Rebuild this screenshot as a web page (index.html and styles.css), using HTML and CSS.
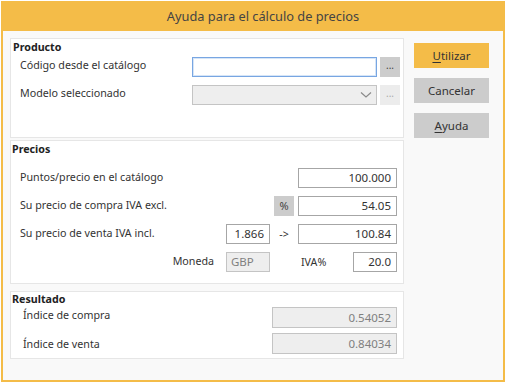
FILE: index.html
```
<!DOCTYPE html>
<html lang="es">
<head>
<meta charset="utf-8">
<title>Ayuda para el cálculo de precios</title>
<link rel="stylesheet" href="styles.css">
</head>
<body>
<div class="window">
  <div class="titlebar">Ayuda para el cálculo de precios</div>
  <div class="content">
    <div class="panels">
      <div class="panel producto">
        <div class="ph">Producto</div>
        <div class="prow">
          <span class="label">Código desde el catálogo</span>
          <div class="field focus"></div>
          <div class="dots">...</div>
        </div>
        <div class="prow">
          <span class="label">Modelo seleccionado</span>
          <div class="field disabled select">
            <svg class="chev" width="12" height="8" viewBox="0 0 12 8"><path d="M1 1.5 L6 6 L11 1.5" fill="none" stroke="#8a8a8a" stroke-width="1.2"/></svg>
          </div>
          <div class="dots off">...</div>
        </div>
      </div>

      <div class="panel precios">
        <div class="ph">Precios</div>
        <div class="pgrid">
          <span class="label c1">Puntos/precio en el catálogo</span>
          <div class="field num c4">100.000</div>

          <span class="label c1">Su precio de compra IVA excl.</span>
          <div class="pct c3">%</div>
          <div class="field num c4">54.05</div>

          <span class="label c1">Su precio de venta IVA incl.</span>
          <div class="field num c2">1.866</div>
          <span class="arrow c3">-&gt;</span>
          <div class="field num c4">100.84</div>

          <span class="label c1 right">Moneda</span>
          <div class="field disabled c2 gbp">GBP</div>
          <div class="iva">
            <span class="ivalabel">IVA%</span>
            <div class="field num ivain">20.0</div>
          </div>
        </div>
      </div>

      <div class="panel resultado">
        <div class="ph">Resultado</div>
        <div class="rrow">
          <span class="label up">Índice de compra</span>
          <div class="field disabled num res">0.54052</div>
        </div>
        <div class="rrow">
          <span class="label">Índice de venta</span>
          <div class="field disabled num res">0.84034</div>
        </div>
      </div>
    </div>

    <div class="buttons">
      <div class="btn primary"><u>U</u>tilizar</div>
      <div class="btn">Cancelar</div>
      <div class="btn"><u>A</u>yuda</div>
    </div>
  </div>
</div>
</body>
</html>
```
FILE: styles.css
```
* { box-sizing: border-box; }
html, body { margin: 0; padding: 0; background: #ffffff; }
body {
  font-family: "Noto Sans", "DejaVu Sans", sans-serif;
  font-size: 10.7px;
  color: #333333;
}
.window {
  margin: 1px 2px 2px 1px;
  width: 504px;
  height: 381px;
  border: 2px solid #f4bc48;
  border-top: none;
  background: #f9f9f9;
  display: flex;
  flex-direction: column;
}
.titlebar {
  height: 30px;
  margin: 0 -2px;
  padding-left: 20px;
  background: #f4bc48;
  color: #444444;
  font-size: 12.8px;
  text-align: center;
  line-height: 31px;
}
.content {
  display: flex;
  padding: 7px 0 0 7px;
}
.panels {
  width: 394px;
  display: flex;
  flex-direction: column;
}
.panel {
  background: #ffffff;
  border: 1px solid #e6e6e6;
}
.ph {
  font-weight: bold;
  color: #222222;
  height: 16px;
  line-height: 16px;
  padding-left: 1px;
}
.label { color: #333333; white-space: nowrap; }

.producto { height: 100px; padding: 0 3px 0 1px; }
.producto .ph { margin-bottom: 2px; }
.prow {
  display: flex;
  align-items: center;
  height: 20px;
  margin-bottom: 8px;
  padding-left: 8px;
}
.prow .label { flex: 1; position: relative; top: -2px; }
.field {
  height: 20px;
  border: 1px solid #a6a6a6;
  background: #ffffff;
  color: #333333;
  font-size: 11.5px;
  line-height: 18px;
  padding: 0 5px;
  white-space: nowrap;
}
.field.focus {
  width: 185px;
  border-color: #78a6e2;
  box-shadow: inset 0 0 0 1px #d6e5f7;
}
.field.disabled {
  background: #eeeeee;
  border-color: #c4c4c4;
  color: #808080;
}
.select { width: 185px; display: flex; align-items: center; justify-content: flex-end; padding-right: 4px; }
.dots {
  width: 20px;
  height: 20px;
  margin-left: 3px;
  background: #cccccc;
  color: #444444;
  text-align: center;
  line-height: 16px;
  font-size: 10px;
}
.dots.off { background: #ececec; color: #aaaaaa; }

.precios { margin-top: 2px; height: 144px; }
.pgrid {
  display: grid;
  grid-template-columns: 1fr 44px 20px 99px;
  grid-auto-rows: 20px;
  column-gap: 4px;
  row-gap: 8px;
  padding: 11px 6px 0 9px;
  align-items: center;
}
.c1 { grid-column: 1; }
.c2 { grid-column: 2; }
.c3 { grid-column: 3; }
.c4 { grid-column: 4; }
.pgrid .label { position: relative; top: -1px; }
.right { text-align: right; padding-right: 8px; }
.num { text-align: right; }
.pct {
  height: 20px;
  background: #cccccc;
  text-align: center;
  line-height: 20px;
  color: #444444;
  font-size: 11px;
}
.arrow { text-align: center; color: #333333; }
.gbp { text-align: left; padding-left: 4px; }
.iva {
  grid-column: 3 / span 2;
  display: flex;
  align-items: center;
  justify-content: space-between;
  padding-left: 27px;
}
.ivain { width: 44px; }

.resultado { margin-top: 7px; height: 68px; padding-right: 6px; }
.resultado .ph { height: 15px; line-height: 15px; }
.rrow {
  display: flex;
  align-items: center;
  height: 21px;
  margin-bottom: 5px;
  padding-left: 12px;
}
.rrow .label { flex: 1; }
.rrow .label.up { position: relative; top: -3px; }
.res { width: 125px; height: 21px; line-height: 19px; font-size: 11.5px; }

.buttons {
  display: flex;
  flex-direction: column;
  gap: 10px;
  padding: 5px 0 0 10px;
}
.btn {
  width: 75px;
  height: 25px;
  background: #cccccc;
  color: #333333;
  text-align: center;
  line-height: 25px;
  font-size: 11.5px;
}
.btn.primary { background: #f4bc48; }
.btn u { text-decoration-thickness: 1px; text-underline-offset: 2px; }
```
